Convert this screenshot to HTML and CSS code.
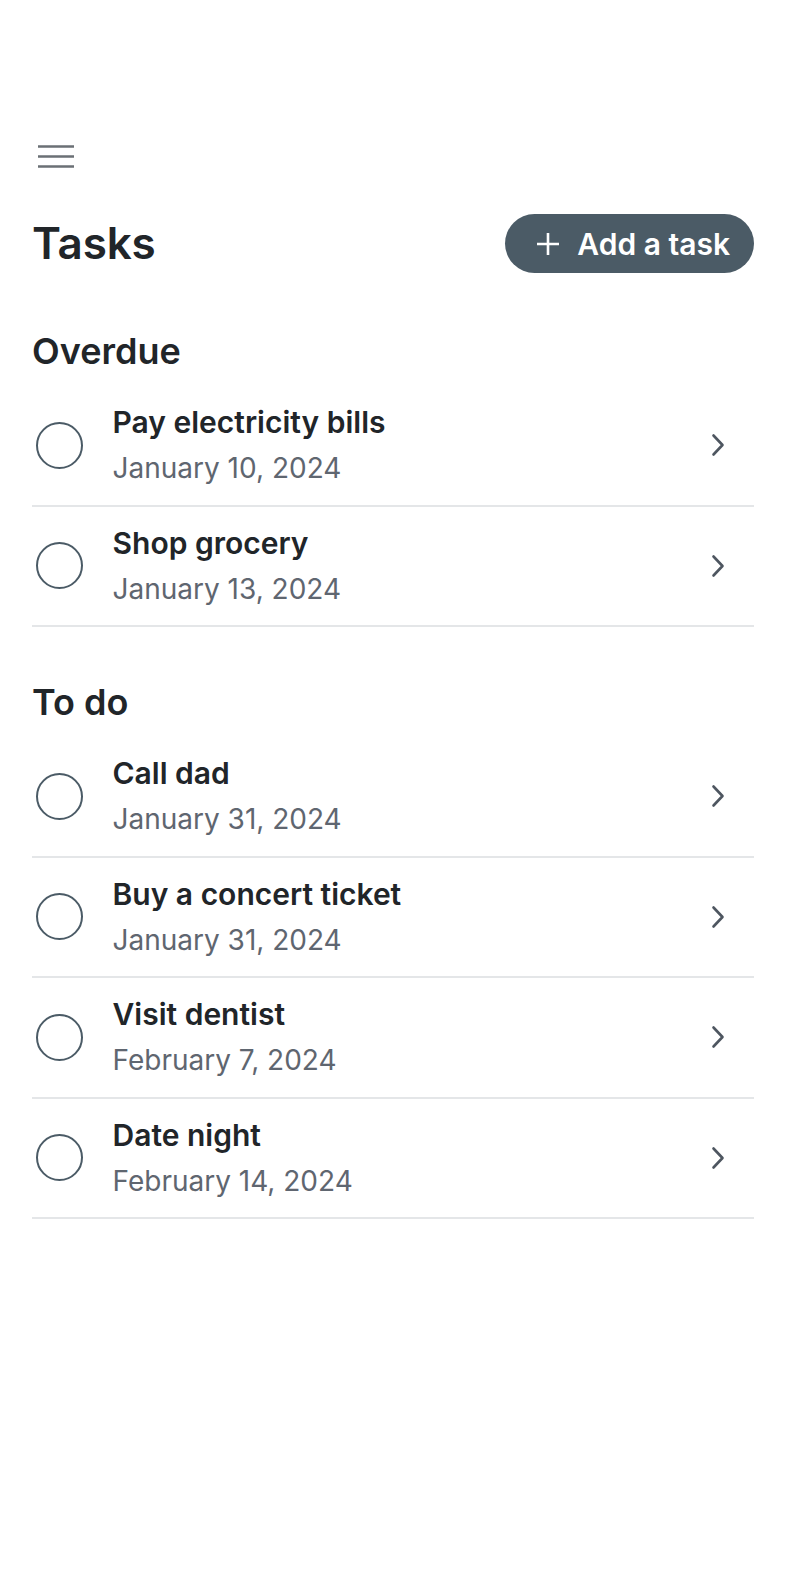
FILE: index.html
```html
<!DOCTYPE html>
<html lang="en">
<head>
<meta charset="utf-8">
<title>Tasks</title>
<link rel="stylesheet" href="styles.css">
</head>
<body>
<div class="app">
  <div class="topbar">
    <svg class="menu" width="36" height="27" viewBox="0 0 36 27" aria-hidden="true">
      <path d="M0 3.5H36M0 13.5H36M0 23.5H36" stroke="#6b7075" stroke-width="2.6" fill="none"/>
    </svg>
  </div>
  <div class="header">
    <h1 class="title">Tasks</h1>
    <button class="add-btn">
      <svg width="24" height="24" viewBox="0 0 24 24" aria-hidden="true">
        <path d="M12 1V23M1 12H23" stroke="#ffffff" stroke-width="2.6" fill="none"/>
      </svg>
      <span>Add a task</span>
    </button>
  </div>

  <section class="section">
    <h2 class="section-title">Overdue</h2>
    <ul class="list">
      <li class="row">
        <span class="check"></span>
        <div class="text"><div class="name">Pay electricity bills</div><div class="date">January 10, 2024</div></div>
        <svg class="chev" width="14" height="24" viewBox="0 0 14 24" aria-hidden="true"><path d="M2.5 2.5L11.5 12L2.5 21.5" stroke="#4e5660" stroke-width="2.6" fill="none" stroke-linecap="round" stroke-linejoin="round"/></svg>
      </li>
      <li class="row">
        <span class="check"></span>
        <div class="text"><div class="name">Shop grocery</div><div class="date">January 13, 2024</div></div>
        <svg class="chev" width="14" height="24" viewBox="0 0 14 24" aria-hidden="true"><path d="M2.5 2.5L11.5 12L2.5 21.5" stroke="#4e5660" stroke-width="2.6" fill="none" stroke-linecap="round" stroke-linejoin="round"/></svg>
      </li>
    </ul>
  </section>

  <section class="section">
    <h2 class="section-title">To do</h2>
    <ul class="list">
      <li class="row">
        <span class="check"></span>
        <div class="text"><div class="name">Call dad</div><div class="date">January 31, 2024</div></div>
        <svg class="chev" width="14" height="24" viewBox="0 0 14 24" aria-hidden="true"><path d="M2.5 2.5L11.5 12L2.5 21.5" stroke="#4e5660" stroke-width="2.6" fill="none" stroke-linecap="round" stroke-linejoin="round"/></svg>
      </li>
      <li class="row">
        <span class="check"></span>
        <div class="text"><div class="name">Buy a concert ticket</div><div class="date">January 31, 2024</div></div>
        <svg class="chev" width="14" height="24" viewBox="0 0 14 24" aria-hidden="true"><path d="M2.5 2.5L11.5 12L2.5 21.5" stroke="#4e5660" stroke-width="2.6" fill="none" stroke-linecap="round" stroke-linejoin="round"/></svg>
      </li>
      <li class="row">
        <span class="check"></span>
        <div class="text"><div class="name">Visit dentist</div><div class="date">February 7, 2024</div></div>
        <svg class="chev" width="14" height="24" viewBox="0 0 14 24" aria-hidden="true"><path d="M2.5 2.5L11.5 12L2.5 21.5" stroke="#4e5660" stroke-width="2.6" fill="none" stroke-linecap="round" stroke-linejoin="round"/></svg>
      </li>
      <li class="row">
        <span class="check"></span>
        <div class="text"><div class="name">Date night</div><div class="date">February 14, 2024</div></div>
        <svg class="chev" width="14" height="24" viewBox="0 0 14 24" aria-hidden="true"><path d="M2.5 2.5L11.5 12L2.5 21.5" stroke="#4e5660" stroke-width="2.6" fill="none" stroke-linecap="round" stroke-linejoin="round"/></svg>
      </li>
    </ul>
  </section>
</div>
</body>
</html>
```

FILE: styles.css
```css
* { box-sizing: border-box; }
html, body { margin: 0; padding: 0; background: #ffffff; }
body {
  font-family: Inter, "Noto Sans", "Liberation Sans", sans-serif;
  color: #212529;
}
.app {
  padding: 0 32px;
}
.topbar {
  padding-top: 142.5px;
  padding-left: 6px;
  height: 169.5px;
}
.menu { display: block; }
.header {
  margin-top: 44.5px;
  display: flex;
  align-items: center;
  justify-content: space-between;
  height: 59px;
}
.title {
  margin: 0;
  font-size: 44px;
  font-weight: 600;
  line-height: 59px;
  letter-spacing: -0.2px;
}
.add-btn {
  display: flex;
  align-items: center;
  gap: 17px;
  height: 59px;
  padding: 0 24px 0 31px;
  border: none;
  border-radius: 30px;
  background: #4b5b66;
  color: #ffffff;
  font-family: inherit;
  font-size: 30px;
  font-weight: 600;
}
.add-btn svg { display: block; }
.section-title {
  margin: 56px 0 13px;
  font-size: 36px;
  font-weight: 600;
  line-height: 44px;
}
.section + .section .section-title { margin-top: 53px; }
.list {
  list-style: none;
  margin: 0;
  padding: 0;
}
.row {
  display: flex;
  align-items: center;
  height: 120.5px;
  border-bottom: 2px solid #e4e6e8;
}
.check {
  flex: none;
  width: 47px;
  height: 47px;
  margin-left: 3.5px;
  border: 2px solid #4b5b66;
  border-radius: 50%;
}
.text {
  flex: 1;
  margin-left: 30px;
  display: flex;
  flex-direction: column;
  gap: 10px;
}
.name {
  font-size: 30px;
  font-weight: 600;
  line-height: 36px;
}
.date {
  font-size: 28px;
  font-weight: 400;
  line-height: 36px;
  color: #5f6670;
}
.chev {
  flex: none;
  display: block;
  margin-right: 29px;
}
```
